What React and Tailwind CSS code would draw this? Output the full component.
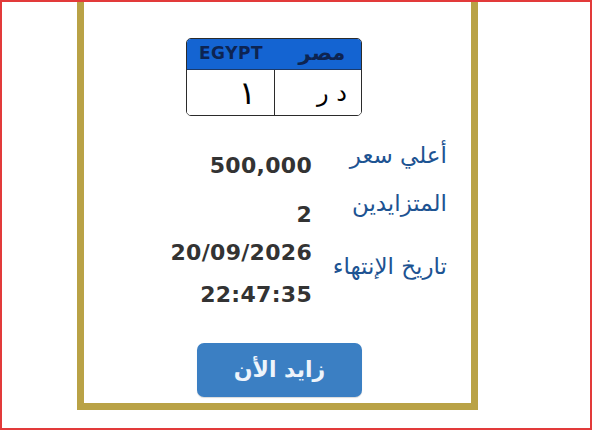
const ARABIC = { fontFamily: '"DejaVu Sans", "Noto Sans", sans-serif' };

const rows = [
  { label: 'أعلي سعر', values: ['500,000'], h: 'h-[49px]', lm: '-mt-[12px]' },
  { label: 'المتزايدين', values: ['2'], h: 'h-[38px]', lm: '-mt-[13px]' },
  { label: 'تاريخ الإنتهاء', values: ['20/09/2026', '22:47:35'], h: 'h-[70px]', lm: 'mt-[12px]' },
];

const Plate = () => (
  <div className="ml-[102px] mt-[36px] flex h-[78px] w-[176px] flex-col overflow-hidden rounded-[5px] border-[1.5px] border-[#2b2b2b]">
    <div className="flex h-[31px] border-b border-[#1b3a6b] bg-[#1464d2] text-[#0d2452]">
      <div className="flex w-[88px] items-center justify-center">
        <span className="text-[17px] font-bold tracking-[0.5px]" style={ARABIC}>EGYPT</span>
      </div>
      <div className="flex flex-1 items-center justify-center pl-[8px]">
        <span className="text-[21px] font-bold" style={ARABIC}>مصر</span>
      </div>
    </div>
    <div className="flex flex-1 bg-white text-black">
      <div className="flex w-[88px] items-center justify-end border-r-[1.5px] border-[#2b2b2b] pr-[18px]">
        <span className="text-[32px] leading-none" style={ARABIC}>١</span>
      </div>
      <div className="flex flex-1 items-center justify-end pr-[14px]">
        <span className="text-[24px] leading-none" style={ARABIC} dir="rtl">د ر</span>
      </div>
    </div>
  </div>
);

export default function App() {
  return (
    <div className="h-[430px] w-[592px] overflow-hidden border-2 border-[#e23a3a] bg-white">
      <div className="ml-[75px] flex h-[408px] w-[401px] flex-col border-x-[7px] border-b-[7px] border-[#b9a246]">
        <Plate />

        <div className="mt-[36px] flex flex-col pr-[24px]" dir="rtl">
          {rows.map((r) => (
            <div key={r.label} className={`flex items-start gap-[10px] ${r.h}`}>
              <div className={`w-[125px] shrink-0 text-[23px] leading-[30px] text-[#1d5392] ${r.lm}`} style={ARABIC}>
                {r.label}
              </div>
              <div className="flex flex-col gap-[14px]" dir="ltr">
                {r.values.map((v) => (
                  <span
                    key={v}
                    className="text-right text-[22px] font-bold leading-[28px] tracking-[0.3px] text-[#333333]"
                    style={ARABIC}
                  >
                    {v}
                  </span>
                ))}
              </div>
            </div>
          ))}
        </div>

        <div className="mt-[34px] flex">
          <button
            className="ml-[113px] flex h-[54px] w-[165px] items-center justify-center rounded-[7px] bg-[#3b7fc3] pb-[2px] text-[22px] font-bold text-[#eef4fb] shadow-[0_1px_1px_rgba(0,0,0,0.15)]"
            style={ARABIC}
            dir="rtl"
          >
            زايد الأن
          </button>
        </div>
      </div>
    </div>
  );
}
